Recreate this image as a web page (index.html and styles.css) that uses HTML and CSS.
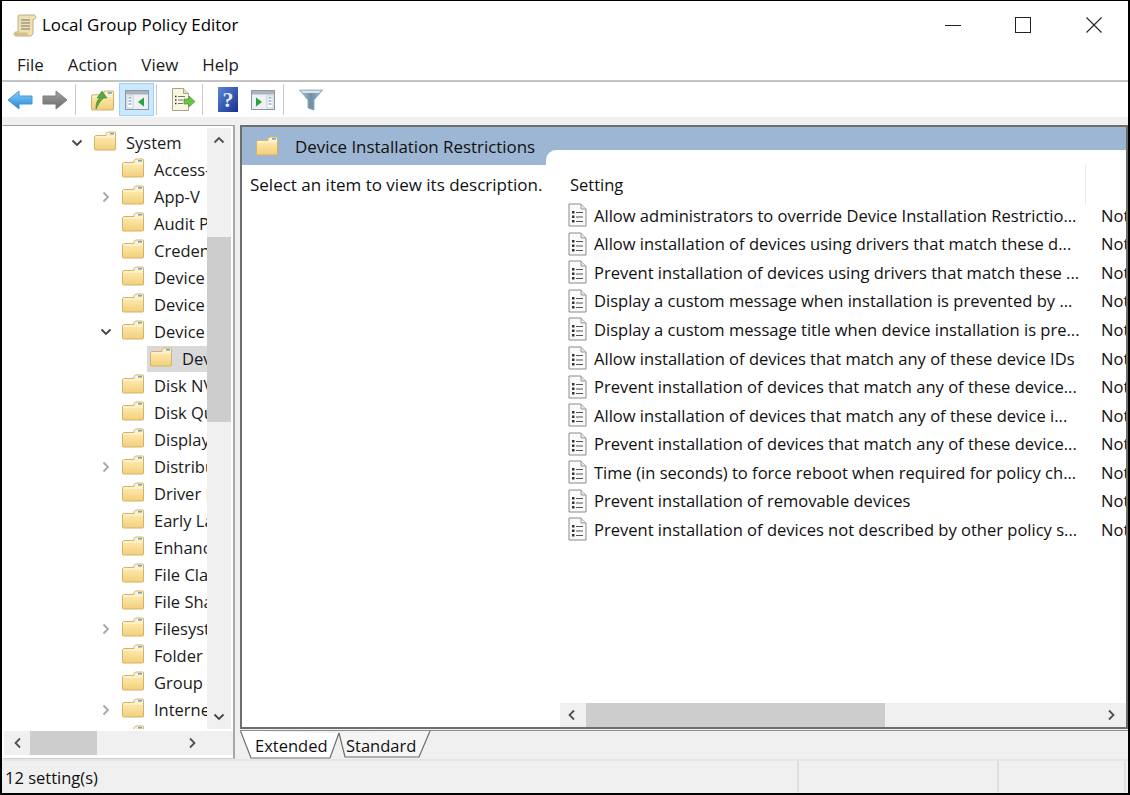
FILE: index.html
```html
<!DOCTYPE html>
<html lang="en">
<head>
<meta charset="utf-8">
<title>Local Group Policy Editor</title>
<link rel="stylesheet" href="styles.css">
</head>
<body>
<svg class="defs" width="0" height="0" aria-hidden="true">
  <defs>
    <linearGradient id="fg" x1="0" y1="0" x2="0" y2="1">
      <stop offset="0" stop-color="#fdf1c4"/><stop offset="0.55" stop-color="#f9df9a"/><stop offset="1" stop-color="#f2cf7c"/>
    </linearGradient>
    <symbol id="folder" viewBox="0 0 22 20">
      <path d="M.5 5.500V18a1 1 0 0 0 1 1h19a1 1 0 0 0 1-1V2a1 1 0 0 0-1-1h-7l-1.500 1.500L12 4.500H2z" fill="url(#fg)" stroke="#d5b268"/>
      <path d="M12.500 4.500 14 2h7v2.500z" fill="#fff6d8"/>
      <rect x="16" y="2" width="4" height="1.600" fill="#6fa3d8"/>
      <path d="M1 6h20" stroke="#fff8df" stroke-width="1"/>
    </symbol>
    <symbol id="doc" viewBox="0 0 19 24">
      <path d="M1 1h12l5 5v17H1z" fill="#fafafa" stroke="#8a8a8a"/>
      <path d="M13 1v5h5" fill="#e8e8e8" stroke="#9a9a9a"/>
      <path d="M4 8h2.500v2.500H4zM4 12.500h2.500V15H4zM4 17h2.500v2.500H4z" fill="#333"/>
      <path d="M8 9.500h7M8 14h7M8 18.500h7" stroke="#555" stroke-width="1.200"/>
    </symbol>
    <symbol id="chev-d" viewBox="0 0 12 12"><path d="M1.500 3.500 6 8l4.500-4.500" fill="none" stroke="#444" stroke-width="1.800"/></symbol>
    <symbol id="chev-u" viewBox="0 0 12 12"><path d="M1.500 8.500 6 4l4.500 4.500" fill="none" stroke="#505050" stroke-width="1.800"/></symbol>
    <symbol id="chev-r" viewBox="0 0 12 12"><path d="M3.500 1.500 8 6l-4.500 4.500" fill="none" stroke="#a6a6a6" stroke-width="1.800"/></symbol>
    <symbol id="sc-l" viewBox="0 0 12 12"><path d="M8 1.500 3.500 6 8 10.500" fill="none" stroke="#505050" stroke-width="1.800"/></symbol>
    <symbol id="sc-r" viewBox="0 0 12 12"><path d="M4 1.500 8.500 6 4 10.500" fill="none" stroke="#505050" stroke-width="1.800"/></symbol>
  </defs>
</svg>

<div class="window">
  <header class="titlebar">
    <svg class="appicon" viewBox="0 0 24 24" width="24" height="24">
      <path d="M6 2h15c2 0 2.500 3.500 0 4.500H20V19c0 2.500-1 4-3 4H3c-2.500 0-3-3.500 0-4h2V4c0-1 .3-2 1-2z" fill="#efe0b4" stroke="#bfae82"/>
      <path d="M8 7h9M8 10h9M8 13h9M8 16h9" stroke="#7b7566" stroke-width="1.100"/>
      <path d="M3 19.500h12c-.8 1-.8 2.500 0 3.500H3.500C1.500 23 .8 20.500 3 19.500z" fill="#d4bd86"/>
    </svg>
    <span class="title">Local Group Policy Editor</span>
    <div class="winbtns">
      <span class="winbtn"><svg width="16" height="16" viewBox="0 0 16 16"><path d="M0 8.500h16" stroke="#222"/></svg></span>
      <span class="winbtn"><svg width="16" height="16" viewBox="0 0 16 16"><rect x=".5" y=".5" width="15" height="15" fill="none" stroke="#222"/></svg></span>
      <span class="winbtn"><svg width="16" height="16" viewBox="0 0 16 16"><path d="M.5.500l15 15M15.500.500l-15 15" stroke="#222" stroke-width="1.100"/></svg></span>
    </div>
  </header>

  <nav class="menubar">
    <span class="menu">File</span><span class="menu">Action</span><span class="menu">View</span><span class="menu">Help</span>
  </nav>

  <div class="toolbar">
    <span class="tb tb-back"><svg width="26" height="22" viewBox="0 0 26 22"><defs><linearGradient id="bl" x1="0" y1="0" x2="0" y2="1"><stop offset="0" stop-color="#8fd0fa"/><stop offset="1" stop-color="#1f86d6"/></linearGradient></defs><path d="M1 11 12 2v5h13v8H12v5z" fill="url(#bl)" stroke="#4a94cf"/></svg></span>
    <span class="tb tb-fwd"><svg width="26" height="22" viewBox="0 0 26 22"><defs><linearGradient id="gr" x1="0" y1="0" x2="0" y2="1"><stop offset="0" stop-color="#a4a4a4"/><stop offset="1" stop-color="#686868"/></linearGradient></defs><path d="M25 11 14 2v5H1v8h13v5z" fill="url(#gr)" stroke="#7d7d7d"/></svg></span>
    <span class="tsep s1"></span>
    <span class="tb tb-up"><svg width="23" height="22" viewBox="0 0 23 22"><use href="#folder" width="23" height="21" y="1"/><path d="M5 20c0-6 1-9 4-11H6l5-7 5 7h-3c-3 2-5 5-8 11z" fill="#58a83c" stroke="#3f8a2a" stroke-width=".6"/></svg></span>
    <span class="tb tb-active"><svg width="24" height="20" viewBox="0 0 24 20"><rect x=".5" y=".5" width="23" height="19" fill="#eef0f2" stroke="#8c98a4"/><path d="M1 1h22v3.500H1z" fill="#aab4be"/><rect x="2" y="6" width="6" height="12" fill="#fff" stroke="#a8b4c0" stroke-width=".6"/><path d="M3.500 8h3M3.500 11h3M3.500 14h3" stroke="#4d80c0" stroke-width="1.200"/><path d="M19 7.500v9l-6-4.500z" fill="#28a048"/></svg></span>
    <span class="tsep s2"></span>
    <span class="tb tb-exp"><svg width="25" height="25" viewBox="0 0 25 25"><path d="M1.500 1.500h11l5 5v17h-16z" fill="#fbf6df" stroke="#a9a38a"/><path d="M12.500 1.500v5h5" fill="#e9e2c3" stroke="#a9a38a"/><path d="M4 9.500h1.500M4 13h1.500M4 16.500h1.500" stroke="#333" stroke-width="1.400"/><path d="M7 9.500h7M7 13h5M7 16.500h5" stroke="#777"/><path d="M13 12h5V9l6 5.500-6 5.500v-3h-5z" fill="#6cc24a" stroke="#4c9a30" stroke-width=".7"/></svg></span>
    <span class="tsep s3"></span>
    <span class="tb tb-help"><svg width="20" height="25" viewBox="0 0 20 25"><defs><linearGradient id="hb" x1="0" y1="0" x2="1" y2="1"><stop offset="0" stop-color="#5b86d8"/><stop offset="1" stop-color="#17328e"/></linearGradient></defs><rect width="20" height="25" fill="url(#hb)"/><text class="qmark" x="10" y="19.500" text-anchor="middle">?</text></svg></span>
    <span class="tb tb-show"><svg width="24" height="20" viewBox="0 0 24 20"><rect x=".5" y=".5" width="23" height="19" fill="#eef0f2" stroke="#8c98a4"/><path d="M1 1h22v3.500H1z" fill="#aab4be"/><rect x="16" y="6" width="6" height="12" fill="#fff" stroke="#a8b4c0" stroke-width=".6"/><path d="M17.500 8h3M17.500 11h3M17.500 14h3" stroke="#4d80c0" stroke-width="1.200"/><path d="M5 7.500v9l6-4.500z" fill="#28a048"/></svg></span>
    <span class="tsep s4"></span>
    <span class="tb tb-filter"><svg width="24" height="22" viewBox="0 0 24 22"><defs><linearGradient id="fl" x1="0" y1="0" x2="1" y2="0"><stop offset="0" stop-color="#b4cad9"/><stop offset=".5" stop-color="#6f90a5"/><stop offset="1" stop-color="#a6bdcd"/></linearGradient></defs><path d="M.5 1h23l-8.500 10v10l-6-2v-8z" fill="url(#fl)" stroke="#7a98ab" stroke-width=".7"/><path d="M2 1.500h20l-2 2.500H4z" fill="#d6e4ec"/></svg></span>
  </div>

  <main class="workspace">
    <div class="panes">
      <section class="treepane">
        <div class="tree-top">
          <ul class="tree">
            <li class="row l0"><svg class="chev"><use href="#chev-d"/></svg><svg class="folder"><use href="#folder"/></svg><span>System</span></li>
            <li class="row l1"><i class="chev"></i><svg class="folder"><use href="#folder"/></svg><span>Access-Denied Assistance</span></li>
            <li class="row l1"><svg class="chev"><use href="#chev-r"/></svg><svg class="folder"><use href="#folder"/></svg><span>App-V</span></li>
            <li class="row l1"><i class="chev"></i><svg class="folder"><use href="#folder"/></svg><span>Audit Process Creation</span></li>
            <li class="row l1"><i class="chev"></i><svg class="folder"><use href="#folder"/></svg><span>Credentials Delegation</span></li>
            <li class="row l1"><i class="chev"></i><svg class="folder"><use href="#folder"/></svg><span>Device Guard</span></li>
            <li class="row l1"><i class="chev"></i><svg class="folder"><use href="#folder"/></svg><span>Device Health Attestation</span></li>
            <li class="row l1"><svg class="chev"><use href="#chev-d"/></svg><svg class="folder"><use href="#folder"/></svg><span>Device Installation</span></li>
            <li class="row l2"><div class="sel"><svg class="folder"><use href="#folder"/></svg><span>Device Installation Restrictions</span></div></li>
            <li class="row l1"><i class="chev"></i><svg class="folder"><use href="#folder"/></svg><span>Disk NV Cache</span></li>
            <li class="row l1"><i class="chev"></i><svg class="folder"><use href="#folder"/></svg><span>Disk Quotas</span></li>
            <li class="row l1"><i class="chev"></i><svg class="folder"><use href="#folder"/></svg><span>Display</span></li>
            <li class="row l1"><svg class="chev"><use href="#chev-r"/></svg><svg class="folder"><use href="#folder"/></svg><span>Distributed COM</span></li>
            <li class="row l1"><i class="chev"></i><svg class="folder"><use href="#folder"/></svg><span>Driver Installation</span></li>
            <li class="row l1"><i class="chev"></i><svg class="folder"><use href="#folder"/></svg><span>Early Launch</span></li>
            <li class="row l1"><i class="chev"></i><svg class="folder"><use href="#folder"/></svg><span>Enhanced Storage</span></li>
            <li class="row l1"><i class="chev"></i><svg class="folder"><use href="#folder"/></svg><span>File Classification</span></li>
            <li class="row l1"><i class="chev"></i><svg class="folder"><use href="#folder"/></svg><span>File Share</span></li>
            <li class="row l1"><svg class="chev"><use href="#chev-r"/></svg><svg class="folder"><use href="#folder"/></svg><span>Filesystem</span></li>
            <li class="row l1"><i class="chev"></i><svg class="folder"><use href="#folder"/></svg><span>Folder Redirection</span></li>
            <li class="row l1"><i class="chev"></i><svg class="folder"><use href="#folder"/></svg><span>Group Policy</span></li>
            <li class="row l1"><svg class="chev"><use href="#chev-r"/></svg><svg class="folder"><use href="#folder"/></svg><span>Internet Communication</span></li>
            <li class="row l1"><i class="chev"></i><svg class="folder"><use href="#folder"/></svg><span>iSCSI</span></li>
          </ul>
          <div class="vscroll">
            <svg class="sc-btn"><use href="#chev-u" x="6" y="6" width="12" height="12"/></svg>
            <div class="vtrack"><div class="vthumb"></div></div>
            <svg class="sc-btn"><use href="#chev-d" x="6" y="6" width="12" height="12"/></svg>
          </div>
        </div>
        <div class="hscroll tree-h">
          <svg class="sc-btn"><use href="#sc-l" x="6" y="6" width="12" height="12"/></svg>
          <div class="htrack"><div class="hthumb"></div></div>
          <svg class="sc-btn"><use href="#sc-r" x="6" y="6" width="12" height="12"/></svg>
        </div>
      </section>

      <section class="detail">
        <div class="detail-in">
          <div class="band">
            <div class="band-tab"><svg class="folder band-folder"><use href="#folder"/></svg><span>Device Installation Restrictions</span></div>
            <div class="band-rest"><div class="band-white"></div></div>
          </div>
          <div class="detail-body">
            <p class="desc">Select an item to view its description.</p>
            <div class="list">
              <div class="list-scroll">
                <div class="list-head"><span class="lh-setting">Setting</span><span class="lh-div"></span></div>
                <ul class="settings">
                  <li class="setting"><svg class="doc"><use href="#doc"/></svg><span class="name">Allow administrators to override Device Installation Restrictio...</span><span class="state">Not configured</span></li>
                  <li class="setting"><svg class="doc"><use href="#doc"/></svg><span class="name">Allow installation of devices using drivers that match these d...</span><span class="state">Not configured</span></li>
                  <li class="setting"><svg class="doc"><use href="#doc"/></svg><span class="name">Prevent installation of devices using drivers that match these ...</span><span class="state">Not configured</span></li>
                  <li class="setting"><svg class="doc"><use href="#doc"/></svg><span class="name">Display a custom message when installation is prevented by ...</span><span class="state">Not configured</span></li>
                  <li class="setting"><svg class="doc"><use href="#doc"/></svg><span class="name">Display a custom message title when device installation is pre...</span><span class="state">Not configured</span></li>
                  <li class="setting"><svg class="doc"><use href="#doc"/></svg><span class="name">Allow installation of devices that match any of these device IDs</span><span class="state">Not configured</span></li>
                  <li class="setting"><svg class="doc"><use href="#doc"/></svg><span class="name">Prevent installation of devices that match any of these device...</span><span class="state">Not configured</span></li>
                  <li class="setting"><svg class="doc"><use href="#doc"/></svg><span class="name">Allow installation of devices that match any of these device i...</span><span class="state">Not configured</span></li>
                  <li class="setting"><svg class="doc"><use href="#doc"/></svg><span class="name">Prevent installation of devices that match any of these device...</span><span class="state">Not configured</span></li>
                  <li class="setting"><svg class="doc"><use href="#doc"/></svg><span class="name">Time (in seconds) to force reboot when required for policy ch...</span><span class="state">Not configured</span></li>
                  <li class="setting"><svg class="doc"><use href="#doc"/></svg><span class="name">Prevent installation of removable devices</span><span class="state">Not configured</span></li>
                  <li class="setting"><svg class="doc"><use href="#doc"/></svg><span class="name">Prevent installation of devices not described by other policy s...</span><span class="state">Not configured</span></li>
                </ul>
              </div>
              <div class="hscroll list-h">
                <svg class="sc-btn"><use href="#sc-l" x="6" y="6" width="12" height="12"/></svg>
                <div class="htrack"><div class="hthumb"></div></div>
                <svg class="sc-btn"><use href="#sc-r" x="6" y="6" width="12" height="12"/></svg>
              </div>
            </div>
          </div>
        </div>
        <div class="tabs">
          <div class="tab tab-on">
            <svg class="tabshape" width="100" height="29" viewBox="0 0 100 29"><path d="M.5 0 11 27h79l9-25" fill="#fff" stroke="#6d6d6d" stroke-width="1.200"/></svg>
            <span>Extended</span>
          </div>
          <div class="tab tab-off">
            <svg class="tabshape" width="97" height="29" viewBox="0 0 97 29"><path d="M4 2 10 26h74L95 0" fill="#f5f5f5" stroke="#6d6d6d" stroke-width="1.200"/></svg>
            <span>Standard</span>
          </div>
        </div>
      </section>
    </div>
  </main>

  <footer class="statusbar">
    <span class="st st-a">12 setting(s)</span><span class="st st-b"></span><span class="st st-c"></span>
  </footer>
</div>
</body>
</html>
```

FILE: styles.css
```css
* { box-sizing: border-box; }
html, body { margin: 0; padding: 0; }
body {
  width: 1130px;
  height: 795px;
  overflow: hidden;
  background: #fff;
  font-family: "Open Sans", "Noto Sans", "Liberation Sans", sans-serif;
  font-size: 16px;
  color: #111;
}
.defs { position: absolute; }
ul { list-style: none; margin: 0; padding: 0; }
p { margin: 0; }

.window {
  width: 1130px;
  height: 795px;
  border: solid #000;
  border-width: 1px 2px 2px 2px;
  display: flex;
  flex-direction: column;
  background: #fff;
}

/* title bar */
.titlebar { height: 47px; flex: none; display: flex; align-items: center; padding-left: 11px; }
.appicon { margin-right: 5px; }
.title { font-size: 16.9px; flex: 1; color: #000; }
.winbtns { display: flex; }
.winbtn { width: 70.500px; height: 47px; padding-left: 2px; display: flex; align-items: center; justify-content: center; }

/* menu */
.menubar { height: 34px; flex: none; display: flex; align-items: center; padding-left: 15px; border-bottom: 2px solid #c4c4c4; }
.menu { font-size: 16.9px; margin-right: 24px; color: #1a1a1a; }

/* toolbar */
.toolbar { height: 35px; flex: none; display: flex; align-items: center; background: #fff; }
.tb { height: 33px; display: flex; align-items: center; justify-content: center; flex: none; }
.tb-back { width: 28px; margin-left: 4px; }
.tb-fwd { width: 28px; margin-left: 7px; }
.tb-up { width: 28px; margin-left: 5px; }
.tb-active { width: 35px; margin-left: 3px; background: #cce8ff; border: 1px solid #99d1ff; }
.tb-exp { width: 28px; margin-left: 12px; }
.tb-help { width: 24px; margin-left: 13px; }
.tb-show { width: 28px; margin-left: 9px; }
.tb-filter { width: 28px; margin-left: 13px; }
.tsep { width: 1px; height: 31px; background: #c8c8c8; flex: none; }
.s1 { margin-left: 6px; margin-right: 7px; }
.s2 { margin-left: 2px; }
.s3 { margin-left: 5px; }
.s4 { margin-left: 6px; }
.qmark { font-family: "Liberation Serif", serif; font-weight: bold; font-size: 22px; fill: #e8eefc; }

/* workspace */
.workspace { flex: 1; min-height: 0; background: #f0f0f0; padding-top: 8px; }
.panes { display: flex; height: 100%; }

/* tree */
.treepane {
  width: 233px;
  flex: none;
  display: flex;
  flex-direction: column;
  background: #fff;
  border: 1px solid #fff;
  border-top: 1px solid #a0a0a0;
  border-right: 2px solid #a8a8a8;
  border-bottom: 1px solid #d0d0d0;
  padding: 2px 2px 0 1px;
}
.tree-top { flex: 1; min-height: 0; display: flex; overflow: hidden; }
.tree { flex: 1; min-width: 0; overflow: hidden; padding-top: 1px; }
.row { height: 27px; display: flex; align-items: center; white-space: nowrap; overflow: hidden; font-size: 16.5px; color: #1a1a1a; }
.chev { width: 12px; height: 12px; flex: none; display: block; }
.folder { width: 22px; height: 20px; flex: none; margin-bottom: 3px; }
.l0 { padding-left: 67px; }
.l0 .folder { margin-left: 11px; margin-right: 10px; }
.l1 { padding-left: 96px; }
.l1 .folder { margin-left: 10px; margin-right: 10px; }
.l2 { padding-left: 143px; }
.sel { display: flex; align-items: center; height: 26px; flex: 1; background: #d9d9d9; padding-left: 3px; overflow: hidden; }
.sel .folder { margin-right: 10px; }

.vscroll { width: 24px; flex: none; display: flex; flex-direction: column; background: #f0f0f0; }
.vtrack { flex: 1; padding-top: 85px; }
.vthumb { height: 185px; background: #cdcdcd; }
.sc-btn { width: 24px; height: 24px; flex: none; padding: 0; }
.hscroll { height: 24px; flex: none; display: flex; background: #f0f0f0; }
.htrack { flex: 1; display: flex; min-width: 0; }
.hthumb { background: #cdcdcd; }
.tree-h .hthumb { width: 67px; }
.list-h .hthumb { width: 299px; margin-left: 2px; }
.list-h { padding-right: 3px; }
.tree-h { margin: 2px -2px 3px 0; padding: 0 29px 0 2px; }

/* detail */
.detail { flex: 1; min-width: 0; display: flex; flex-direction: column; margin-left: 5px; }
.detail-in { flex: 1; min-height: 0; border: 2px solid #6e6e6e; display: flex; flex-direction: column; background: #fff; overflow: hidden; }
.band { display: flex; height: 38px; flex: none; }
.band-tab { width: 304px; background: #9cb6d3; display: flex; align-items: center; padding-left: 14px; font-size: 16.9px; color: #111; white-space: nowrap; }
.band-folder { margin-right: 17px; margin-bottom: 0; }
.band-rest { flex: 1; height: 38px; background: #9cb6d3; padding-top: 23px; }
.band-white { height: 15px; background: #fff; border-top-left-radius: 10px; }
.detail-body { flex: 1; min-height: 0; display: flex; }
.desc { width: 318px; flex: none; padding: 8px 0 0 8px; font-size: 17px; color: #111; white-space: nowrap; }
.list { flex: 1; min-width: 0; display: flex; flex-direction: column; margin-top: -15px; }
.list-scroll { flex: 1; min-height: 0; overflow: hidden; }
.list-head { height: 51px; padding: 9px 0 0 10px; display: flex; align-items: flex-start; font-size: 16.5px; }
.lh-setting { width: 515px; padding-top: 14px; }
.lh-div { width: 1px; height: 40px; margin-top: 6px; background: #ececec; }
.setting { height: 28.550px; display: flex; align-items: center; white-space: nowrap; }
.doc { width: 19px; height: 24px; flex: none; margin-left: 8px; margin-right: 7px; }
.name { width: 507px; flex: none; font-size: 16.55px; color: #111; overflow: hidden; }
.state { font-size: 16.55px; color: #111; }

/* tabs */
.tabs { height: 29px; margin-top: 1px; flex: none; display: flex; border-top: 1px solid #8e8e8e; }
.tab { position: relative; height: 28px; display: flex; align-items: center; font-size: 16.5px; }
.tab span { position: relative; }
.tabshape { position: absolute; left: 0; top: 0; }
.tab-on { width: 95px; padding-left: 15px; }
.tab-off { width: 97px; padding-left: 11px; }

/* status */
.statusbar { height: 34px; flex: none; display: flex; background: #f0f0f0; border-top: 2px solid #e6e6e6; font-size: 16.5px; }
.st { display: flex; align-items: center; border-right: 2px solid #e0e0e0; padding-left: 3px; }
.st-a { width: 797px; }
.st-b { width: 200px; }
.st-c { width: 127px; }
```
